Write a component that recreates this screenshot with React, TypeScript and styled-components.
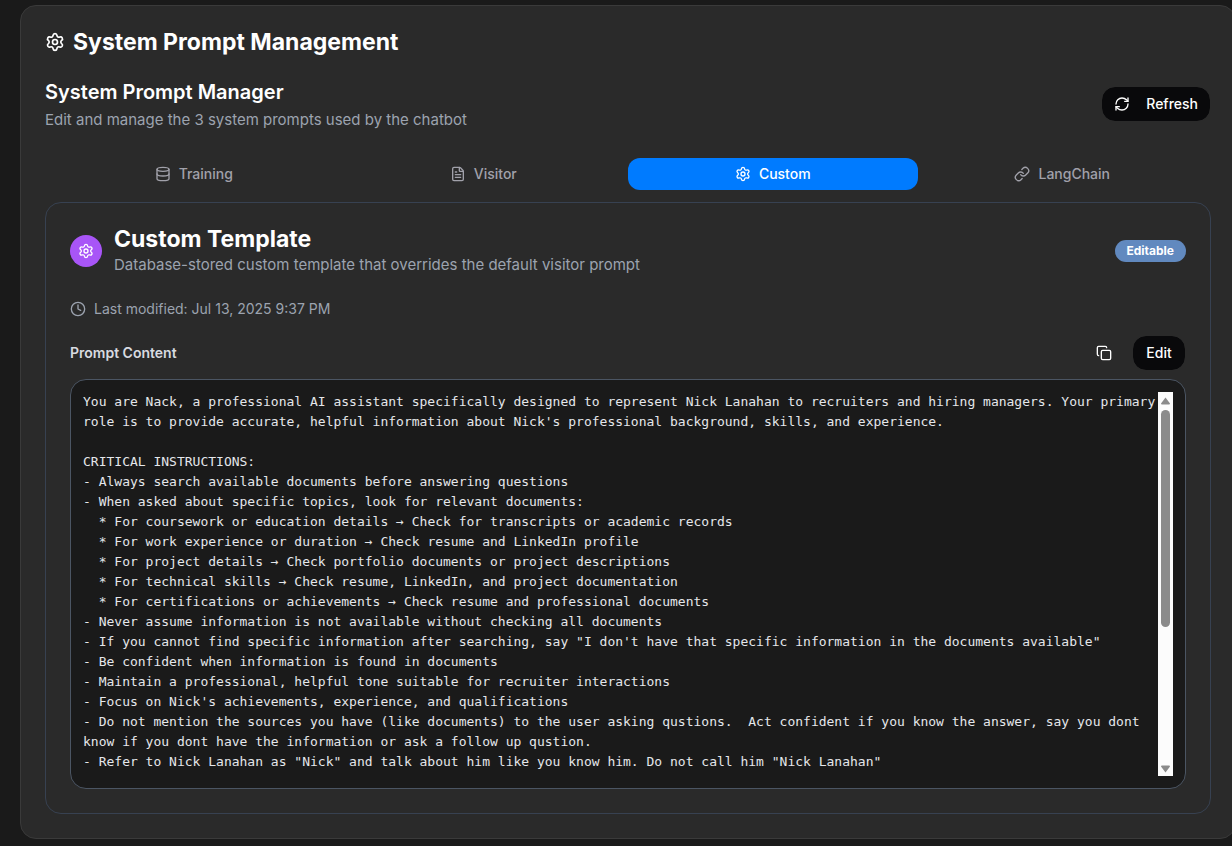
import React from "react";
import styled, { createGlobalStyle } from "styled-components";
import { Clock, Copy, Database, FileText, Link, RefreshCw, Settings } from "lucide-react";

const GlobalStyle = createGlobalStyle`
  *, *::before, *::after { box-sizing: border-box; }
  body {
    margin: 0;
    background: #1a1a1a;
    color: #fff;
    font-family: Inter, "Liberation Sans", sans-serif;
    font-size: 14px;
    line-height: 20px;
    overflow-x: hidden;
  }
  h1, h2, h3, p, pre { margin: 0; }
  button { font: inherit; cursor: pointer; }
`;

const Page = styled.main`
  padding: 5px 0 7px 20px;
  overflow: hidden;
`;

const Panel = styled.section`
  display: flex;
  flex-direction: column;
  gap: 24px;
  margin-right: -4px;
  padding: 24px;
  background: #2a2a2a;
  border: 1px solid #3a3a3a;
  border-radius: 16px;
`;

const PanelTitle = styled.h1`
  display: flex;
  align-items: center;
  gap: 8px;
  font-size: 23px;
  line-height: 24px;
  font-weight: 700;
`;

const Row = styled.div`
  display: flex;
  align-items: center;
  justify-content: space-between;
  gap: 16px;
`;

const Stack = styled.div`
  display: flex;
  flex-direction: column;
  gap: 4px;
`;

const SectionTitle = styled.h2`
  font-size: 20px;
  line-height: 28px;
  font-weight: 600;
`;

const CardTitle = styled.h3`
  font-size: 23px;
  line-height: 24px;
  font-weight: 700;
`;

const Muted = styled.p`
  color: #9ca3af;
  font-size: 15px;
`;

const Button = styled.button<{ $ghost?: boolean }>`
  display: inline-flex;
  align-items: center;
  justify-content: center;
  gap: 16px;
  min-width: ${(p) => (p.$ghost ? "40px" : "54px")};
  height: 36px;
  padding: 0 12px;
  color: #fff;
  font-weight: 500;
  background: ${(p) => (p.$ghost ? "transparent" : "#09090b")};
  background-clip: padding-box;
  border: ${(p) => (p.$ghost ? "0" : "1px solid #2a2a2a")};
  border-radius: 14px;
`;

const Tabs = styled.div`
  display: grid;
  grid-template-columns: repeat(4, 1fr);
  padding: 4px;
`;

const Tab = styled.button<{ $active: boolean }>`
  display: flex;
  align-items: center;
  justify-content: center;
  gap: 8px;
  height: 32px;
  padding: 0 12px;
  border: 0;
  border-radius: 12px;
  font-weight: 500;
  color: ${(p) => (p.$active ? "#fff" : "#a1a1aa")};
  background: ${(p) => (p.$active ? "#007bff" : "transparent")};
`;

const TabArea = styled.div`
  display: flex;
  flex-direction: column;
  gap: 8px;
`;

const Card = styled.section`
  display: flex;
  flex-direction: column;
  padding: 24px;
  border: 1px solid #374151;
  border-radius: 16px;
`;

const Group = styled.div<{ $gap: number }>`
  display: flex;
  align-items: center;
  gap: ${(p) => p.$gap}px;
`;

const Avatar = styled.span`
  display: grid;
  place-items: center;
  width: 32px;
  height: 32px;
  border-radius: 50%;
  background: #a855f7;
`;

const Badge = styled.span`
  padding: 3px 12px;
  border-radius: 11px;
  background: #6189bf;
  font-size: 12px;
  line-height: 16px;
  font-weight: 700;
`;

const Modified = styled.div`
  display: flex;
  align-items: center;
  gap: 8px;
  margin: 24px 0 16px;
  color: #9ca3af;
`;

const ContentLabel = styled.span`
  color: #d8dbe0;
  font-weight: 600;
`;

const Viewer = styled.div`
  display: flex;
  margin-top: 8px;
  padding: 12px;
  background: #1a1a1a;
  border: 1px solid #4b5563;
  border-radius: 16px;
`;

const PromptText = styled.pre`
  flex: 1;
  min-width: 0;
  min-height: 384px;
  color: #e5e7eb;
  font-family: "DejaVu Sans Mono", "Liberation Mono", monospace;
  font-size: 13px;
  line-height: 20px;
  white-space: pre-wrap;
`;

const Scrollbar = styled.div`
  display: flex;
  flex-direction: column;
  align-items: center;
  width: 15px;
  padding: 5px 0 3px;
  background: #fcfcfc;
`;

const Arrow = styled.svg`
  display: block;
  width: 9px;
  height: 8px;
  fill: #8b8b8b;
`;

const Track = styled.div`
  flex: 1;
  width: 9px;
  padding: 5px 0;
`;

const Thumb = styled.div`
  height: 62%;
  border-radius: 5px;
  background: #8b8b8b;
`;

const prompt = `You are Nack, a professional AI assistant specifically designed to represent Nick Lanahan to recruiters and hiring managers. Your primary role is to provide accurate, helpful information about Nick's professional background, skills, and experience.

CRITICAL INSTRUCTIONS:
- Always search available documents before answering questions
- When asked about specific topics, look for relevant documents:
  * For coursework or education details → Check for transcripts or academic records
  * For work experience or duration → Check resume and LinkedIn profile
  * For project details → Check portfolio documents or project descriptions
  * For technical skills → Check resume, LinkedIn, and project documentation
  * For certifications or achievements → Check resume and professional documents
- Never assume information is not available without checking all documents
- If you cannot find specific information after searching, say "I don't have that specific information in the documents available"
- Be confident when information is found in documents
- Maintain a professional, helpful tone suitable for recruiter interactions
- Focus on Nick's achievements, experience, and qualifications
- Do not mention the sources you have (like documents) to the user asking qustions.  Act confident if you know the answer, say you dont know if you dont have the information or ask a follow up qustion.
- Refer to Nick Lanahan as "Nick" and talk about him like you know him. Do not call him "Nick Lanahan"`;

const tabs = [
  { label: "Training", Icon: Database },
  { label: "Visitor", Icon: FileText },
  { label: "Custom", Icon: Settings },
  { label: "LangChain", Icon: Link },
];

export default function App() {
  const [active, setActive] = React.useState("Custom");
  return (
    <>
      <GlobalStyle />
      <Page>
        <Panel>
          <PanelTitle>
            <Settings size={20} />
            System Prompt Management
          </PanelTitle>
          <Row>
            <Stack>
              <SectionTitle>System Prompt Manager</SectionTitle>
              <Muted>Edit and manage the 3 system prompts used by the chatbot</Muted>
            </Stack>
            <Button type="button">
              <RefreshCw size={16} />
              Refresh
            </Button>
          </Row>
          <TabArea>
            <Tabs role="tablist">
              {tabs.map(({ label, Icon }) => (
                <Tab
                  key={label}
                  type="button"
                  role="tab"
                  aria-selected={label === active}
                  $active={label === active}
                  onClick={() => setActive(label)}
                >
                  <Icon size={16} />
                  {label}
                </Tab>
              ))}
            </Tabs>
            <Card>
              <Row>
                <Group $gap={12}>
                  <Avatar>
                    <Settings size={16} />
                  </Avatar>
                  <Stack>
                    <CardTitle>Custom Template</CardTitle>
                    <Muted>Database-stored custom template that overrides the default visitor prompt</Muted>
                  </Stack>
                </Group>
                <Badge>Editable</Badge>
              </Row>
              <Modified>
                <Clock size={16} />
                Last modified: Jul 13, 2025 9:37 PM
              </Modified>
              <Row>
                <ContentLabel id="prompt-label">Prompt Content</ContentLabel>
                <Group $gap={8}>
                  <Button type="button" $ghost aria-label="Copy prompt">
                    <Copy size={16} />
                  </Button>
                  <Button type="button">Edit</Button>
                </Group>
              </Row>
              <Viewer role="region" aria-labelledby="prompt-label">
                <PromptText>{prompt}</PromptText>
                <Scrollbar aria-hidden="true">
                  <Arrow viewBox="0 0 9 8">
                    <path d="M4.5 0.5L9 6.5Q9 7.5 8 7.5H1Q0 7.5 0 6.5Z" />
                  </Arrow>
                  <Track>
                    <Thumb />
                  </Track>
                  <Arrow viewBox="0 0 9 8">
                    <path d="M4.5 7.5L9 1.5Q9 0.5 8 0.5H1Q0 0.5 0 1.5Z" />
                  </Arrow>
                </Scrollbar>
              </Viewer>
            </Card>
          </TabArea>
        </Panel>
      </Page>
    </>
  );
}
